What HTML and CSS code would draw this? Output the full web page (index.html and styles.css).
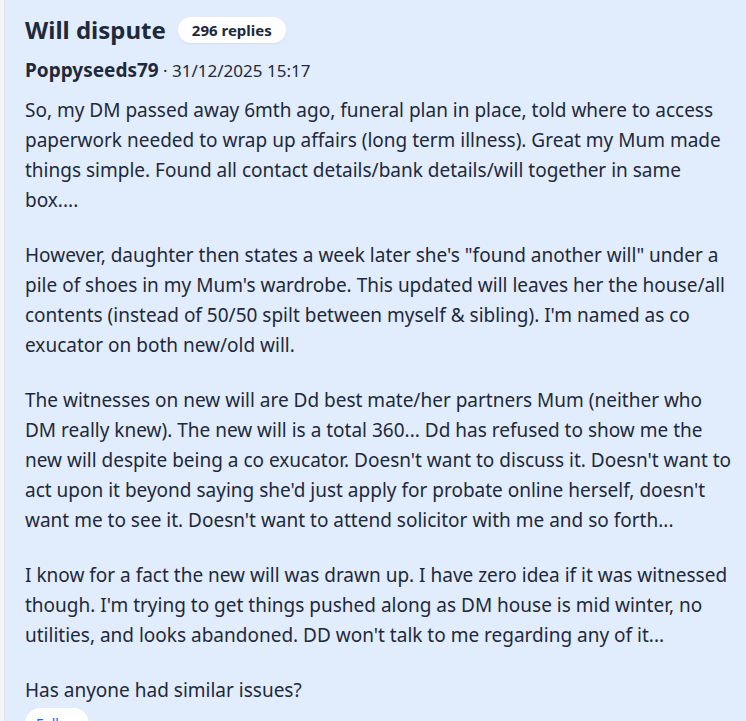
FILE: index.html
```html
<!DOCTYPE html>
<html lang="en">
<head>
<meta charset="utf-8">
<title>Will dispute</title>
<link rel="stylesheet" href="styles.css">
</head>
<body>
<div class="page">
  <aside class="rail"></aside>
  <main class="thread">
    <header class="head">
      <h1 class="title">Will dispute</h1>
      <span class="pill">296 replies</span>
    </header>
    <div class="meta"><span class="author">Poppyseeds79</span> · 31/12/2025 15:17</div>
    <div class="body">
      <p>So, my DM passed away 6mth ago, funeral plan in place, told where to access paperwork needed to wrap up affairs (long term illness). Great my Mum made things simple. Found all contact details/bank details/will together in same box....</p>
      <p>However, daughter then states a week later she's "found another will" under a pile of shoes in my Mum's wardrobe. This updated will leaves her the house/all contents (instead of 50/50 spilt between myself &amp; sibling). I'm named as co exucator on both new/old will.</p>
      <p>The witnesses on new will are Dd best mate/her partners Mum (neither who DM really knew). The new will is a total 360... Dd has refused to show me the new will despite being a co exucator. Doesn't want to discuss it. Doesn't want to act upon it beyond saying she'd just apply for probate online herself, doesn't want me to see it. Doesn't want to attend solicitor with me and so forth...</p>
      <p>I know for a fact the new will was drawn up. I have zero idea if it was witnessed though. I'm trying to get things pushed along as DM house is mid winter, no utilities, and looks abandoned. DD won't talk to me regarding any of it...</p>
      <p>Has anyone had similar issues?</p>
    </div>
    <button class="follow">Follow</button>
  </main>
</div>
</body>
</html>
```
FILE: styles.css
```css
html, body {
  margin: 0;
  padding: 0;
  height: 100%;
  overflow: hidden;
}
body {
  font-family: "Noto Sans", "Open Sans", sans-serif;
  color: #1e293b;
  background: #e1ecfd;
}
.page {
  display: flex;
  min-height: 100%;
}
.rail {
  width: 4px;
  flex: none;
  background: #f3f4f6;
  border-right: 1px solid #e3e5e8;
}
.thread {
  flex: 1;
  min-width: 0;
  padding: 14px 14px 0 20px;
}
.head {
  display: flex;
  align-items: center;
  gap: 12px;
}
.title {
  margin: 0;
  font-size: 24px;
  font-weight: 700;
  line-height: 32px;
  color: #1e293b;
}
.pill {
  background: #fff;
  border-radius: 999px;
  padding: 3px 14px;
  font-size: 15px;
  font-weight: 700;
  line-height: 20px;
  box-shadow: 0 1px 2px rgba(0,0,0,0.06);
}
.meta {
  margin-top: 12px;
  font-size: 17px;
  line-height: 24px;
}
.author {
  font-weight: 700;
  font-size: 19px;
}
.body {
  margin-top: 12px;
  font-size: 19px;
  line-height: 30px;
}
.body p {
  margin: 0 0 25px 0;
}
.body p:last-child {
  margin-bottom: 3px;
}
.follow {
  font-family: inherit;
  border: none;
  background: #fff;
  color: #2563eb;
  border-radius: 999px;
  padding: 6px 11px;
  font-size: 14px;
}
```
